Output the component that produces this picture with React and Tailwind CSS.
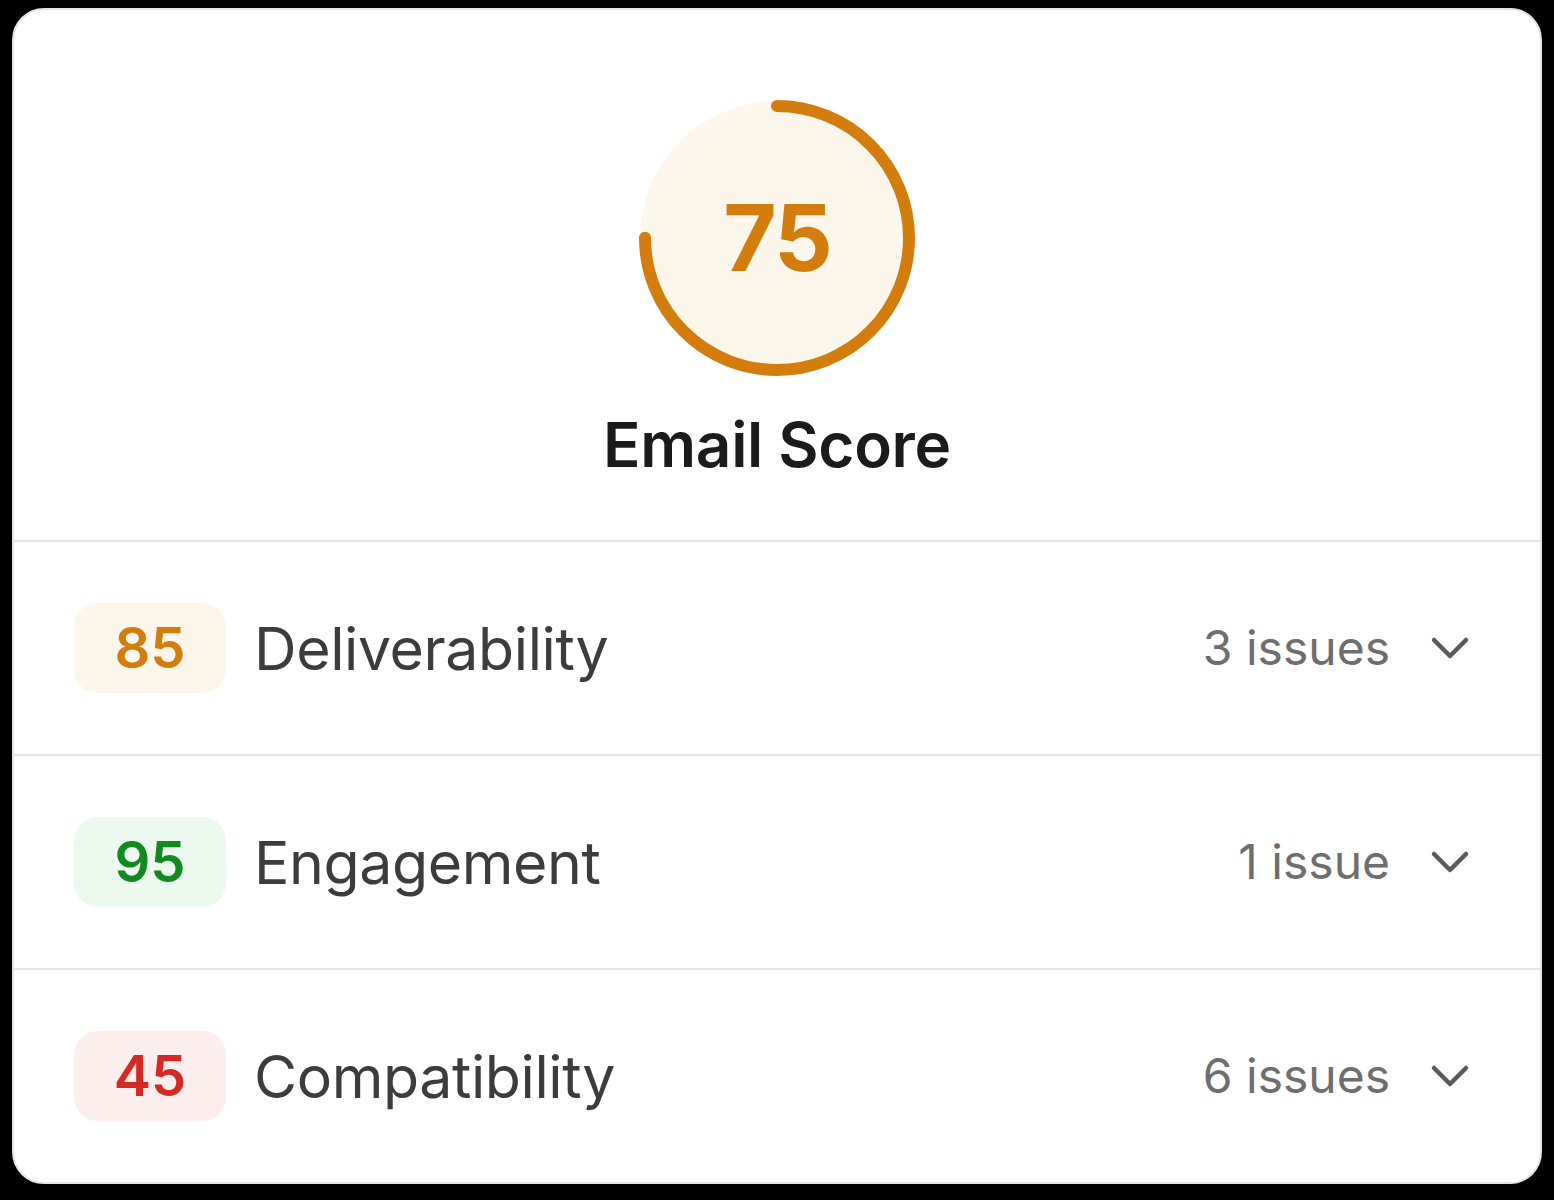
import React from "react";

const rows = [
  { score: 85, label: "Deliverability", issues: "3 issues", badge: "bg-[#fdf6ea]", text: "text-[#d27d0d]" },
  { score: 95, label: "Engagement", issues: "1 issue", badge: "bg-[#ebf9ef]", text: "text-[#138a1f]" },
  { score: 45, label: "Compatibility", issues: "6 issues", badge: "bg-[#fdeeee]", text: "text-[#d42a26]" },
];

const ScoreRing = ({ value }) => {
  const r = 132;
  const c = 2 * Math.PI * r;
  return (
    <svg width="280" height="280" viewBox="0 0 280 280">
      <circle cx="140" cy="140" r="137" fill="#fdf6ea" />
      <circle
        cx="140"
        cy="140"
        r={r}
        fill="none"
        stroke="#d27d0d"
        strokeWidth="12"
        strokeLinecap="round"
        strokeDasharray={`${(c * value) / 100} ${c}`}
        transform="rotate(-90 140 140)"
      />
    </svg>
  );
};

const Chevron = () => (
  <svg width="40" height="26" viewBox="0 0 40 26" fill="none" stroke="#5a5a5a" strokeWidth="4.5" strokeLinecap="round" strokeLinejoin="round">
    <path d="M4 5l16 16 16-16" />
  </svg>
);

export default function App() {
  return (
    <div className="bg-black min-h-[1200px] pt-[8px] px-[12px] pb-[14px] font-['Inter',sans-serif]">
      <div className="bg-white rounded-[32px] border-2 border-[#e3e3e3] overflow-hidden">
        {/* score */}
        <div className="h-[530px] flex flex-col items-center pt-[88px]">
          <div className="relative w-[280px] h-[280px]">
            <ScoreRing value={75} />
            <div className="absolute inset-0 flex items-center justify-center text-[92px] font-bold text-[#d27d0d] tracking-[-2px] leading-none">
              75
            </div>
          </div>
          <h1 className="mt-[36px] text-[62px] font-semibold text-[#1b1b1b] leading-none tracking-[-0.3px]">Email Score</h1>
        </div>

        {rows.map((row) => (
          <div key={row.label} className="h-[214px] border-t-2 border-[#e6e6e6] flex items-center pl-[60px] pr-[70px]">
            <div className={`w-[152px] h-[90px] rounded-[24px] flex items-center justify-center ${row.badge}`}>
              <span className={`text-[56px] font-semibold leading-none ${row.text}`}>{row.score}</span>
            </div>
            <span className="ml-[28px] text-[59px] text-[#3c3c3c] leading-none tracking-[-0.4px]">{row.label}</span>
            <span className="ml-auto text-[48px] text-[#6e6e6e] leading-none">{row.issues}</span>
            <span className="ml-[40px] flex">
              <Chevron />
            </span>
          </div>
        ))}
      </div>
    </div>
  );
}
